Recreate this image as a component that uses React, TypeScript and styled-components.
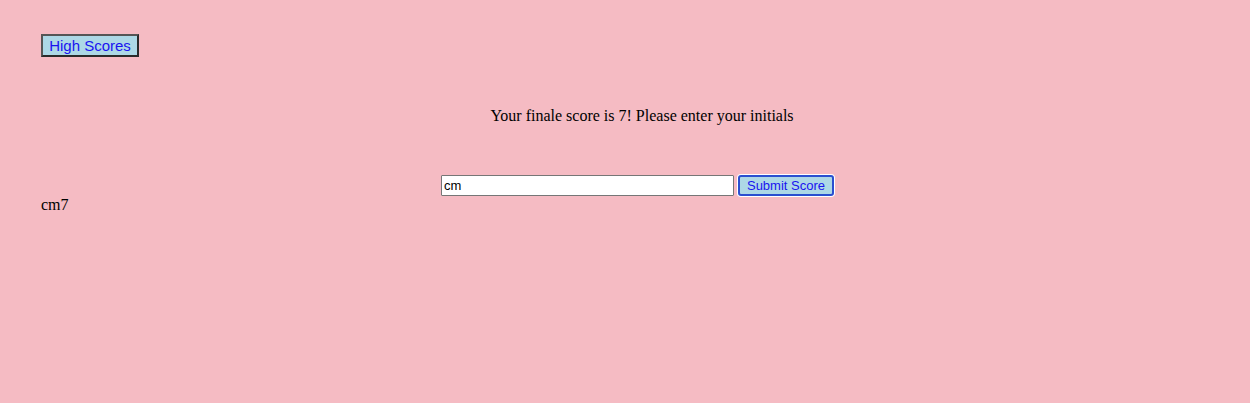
import React, { useState } from "react";
import styled, { createGlobalStyle } from "styled-components";

const GlobalStyle = createGlobalStyle`
	html, body {
		margin: 0;
		padding: 0;
		background: #f5bbc3;
	}
	body {
		font-family: "Liberation Serif", "Times New Roman", serif;
		font-size: 16px;
		color: #000;
	}
`;

const App: React.FC = () => {
	const [initials, setInitials] = useState("cm");
	const score = 7;

	return (
		<>
			<GlobalStyle />
			<Page>
				<Header>
					<HighScoresButton>High Scores</HighScoresButton>
				</Header>
				<Prompt>
					Your finale score is {score}! Please enter your initials
				</Prompt>
				<ScoreForm onSubmit={(e) => e.preventDefault()}>
					<InitialsInput
						type="text"
						value={initials}
						onChange={(e) => setInitials(e.target.value)}
					/>
					<SubmitButton type="submit">Submit Score</SubmitButton>
				</ScoreForm>
				<SavedScore>cm7</SavedScore>
			</Page>
		</>
	);
};
export default App;

const Page = styled.div`
	min-height: 403px;
	box-sizing: border-box;
	padding: 34px 7px 0 41px;
	display: flex;
	flex-direction: column;
`;

const Header = styled.div`
	display: flex;
`;

const HighScoresButton = styled.button`
	height: 23px;
	width: 98px;
	padding: 0;
	box-sizing: border-box;
	border: 2px solid #2a2a2a;
	border-top-color: #555;
	border-left-color: #555;
	background: #add8e6;
	color: #1a14f0;
	font-family: "Liberation Sans", Arial, sans-serif;
	font-size: 15px;
	line-height: 19px;
	cursor: pointer;
`;

const Prompt = styled.p`
	margin: 50px 0 0;
	line-height: 18px;
	text-align: center;
`;

const ScoreForm = styled.form`
	margin-top: 50px;
	display: flex;
	justify-content: center;
	align-items: center;
	gap: 4px;
	padding-right: 9px;
`;

const InitialsInput = styled.input`
	width: 293px;
	height: 21px;
	box-sizing: border-box;
	border: 1px solid #767676;
	border-radius: 1px;
	padding: 1px 2px;
	background: #fff;
	font-family: "Liberation Sans", Arial, sans-serif;
	font-size: 13px;
	color: #000;
	outline: none;
`;

const SubmitButton = styled.button`
	width: 96px;
	height: 21px;
	box-sizing: border-box;
	padding: 0;
	border: 2px solid #2a4fd0;
	border-radius: 3px;
	box-shadow: 0 0 0 1px #fff;
	background: #add8e6;
	color: #1a14f0;
	font-family: "Liberation Sans", Arial, sans-serif;
	font-size: 13px;
	line-height: 17px;
	cursor: pointer;
`;

const SavedScore = styled.div`
	line-height: 18px;
`;
